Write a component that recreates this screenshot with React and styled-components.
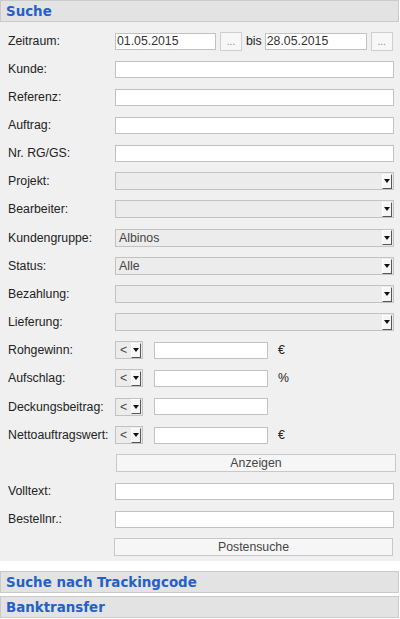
import React from "react";
import styled, { createGlobalStyle } from "styled-components";

const Global = createGlobalStyle`
  html, body { margin: 0; padding: 0; background: #fff; }
  body { font-family: "Liberation Sans", Arial, sans-serif; font-size: 12px; color: #222; }
`;

const Page = styled.div`
  width: 400px;
  display: flex;
  flex-direction: column;
`;

const Header = styled.div`
  box-sizing: border-box;
  height: 22px;
  width: 399px;
  border: 1px solid #cacaca;
  background: #e3e3e3;
  padding-left: 5px;
  display: flex;
  align-items: center;
  font-family: "DejaVu Sans", sans-serif;
  font-weight: bold;
  font-size: 13.4px;
  color: #2360c8;
  margin-top: ${(p) => p.$mt || 0}px;
`;

const Content = styled.div`
  background: #f0f0f0;
  padding: 5px 0 0 8px;
  display: flex;
  flex-direction: column;
`;

const Row = styled.div`
  height: ${(p) => (p.$tall ? 29 : 28)}px;
  display: flex;
  align-items: center;
`;

const Label = styled.div`
  width: 107px;
  flex: none;
  font-size: 12.3px;
  color: #222;
`;

const Input = styled.input`
  box-sizing: border-box;
  height: 17px;
  width: ${(p) => p.$w}px;
  border: 1px solid #c2c2c2;
  background: #fff;
  padding: 0 1px;
  font-family: "Liberation Sans", Arial, sans-serif;
  font-size: 12.3px;
  color: #333;
  margin-left: ${(p) => p.$ml || 0}px;
  outline: none;
`;

const DotButton = styled.button`
  box-sizing: border-box;
  width: 22px;
  height: 19px;
  margin-left: ${(p) => p.$ml || 0}px;
  border: 1px solid #cfcfcf;
  background: #f7f7f7;
  color: #888;
  font-size: 10px;
  font-family: "Liberation Sans", Arial, sans-serif;
  padding: 0 0 3px;
  display: flex;
  align-items: flex-end;
  justify-content: center;
`;

const Bis = styled.span`
  margin-left: 4px;
  margin-right: 3px;
  font-size: 12.3px;
  color: #222;
`;

const SelectBox = styled.div`
  box-sizing: border-box;
  width: ${(p) => p.$w}px;
  height: 18px;
  border: 1px solid #c2c2c2;
  background: #ececec;
  display: flex;
  align-items: center;
  justify-content: space-between;
  padding-left: ${(p) => p.$pl || 3}px;
  font-size: 12.3px;
  color: #444;
`;

const Arrow = styled.div`
  box-sizing: border-box;
  width: 10px;
  height: 15px;
  margin-right: 1px;
  background: #f6f6f6;
  border-right: 1px solid #555;
  border-bottom: 1px solid #555;
  border-top: 1px solid #fff;
  border-left: 1px solid #fff;
  display: flex;
  align-items: center;
  justify-content: center;
  &::after {
    content: "";
    border-left: 3.5px solid transparent;
    border-right: 3.5px solid transparent;
    border-top: 4px solid #111;
  }
`;

const Unit = styled.span`
  margin-left: 10px;
  font-size: 12.3px;
  color: #222;
`;

const WideButton = styled.button`
  box-sizing: border-box;
  width: ${(p) => p.$w}px;
  height: 18px;
  margin-left: ${(p) => p.$ml || 0}px;
  border: 1px solid #c8c8c8;
  background: #f6f6f6;
  color: #444;
  font-family: "Liberation Sans", Arial, sans-serif;
  font-size: 12.3px;
  padding: 0;
`;

const Select = ({ w, value, pl }) => (
  <SelectBox $w={w} $pl={pl}>
    <span>{value}</span>
    <Arrow />
  </SelectBox>
);

const Text = ({ label }) => (
  <Row>
    <Label>{label}</Label>
    <Input $w={279} />
  </Row>
);

const Sel = ({ label, value, tall }) => (
  <Row $tall={tall}>
    <Label>{label}</Label>
    <Select w={279} value={value} />
  </Row>
);

const Cmp = ({ label, unit, tall }) => (
  <Row $tall={tall}>
    <Label>{label}</Label>
    <Select w={28} value="<" pl={4} />
    <Input $w={114} $ml={11} />
    {unit && <Unit>{unit}</Unit>}
  </Row>
);

export default function App() {
  return (
    <Page>
      <Global />
      <Header>Suche</Header>
      <Content>
        <Row>
          <Label>Zeitraum:</Label>
          <Input $w={101} defaultValue="01.05.2015" />
          <DotButton $ml={4}>...</DotButton>
          <Bis>bis</Bis>
          <Input $w={102} defaultValue="28.05.2015" />
          <DotButton $ml={4}>...</DotButton>
        </Row>
        <Text label="Kunde:" />
        <Text label="Referenz:" />
        <Text label="Auftrag:" />
        <Text label="Nr. RG/GS:" />
        <Sel label="Projekt:" />
        <Sel label="Bearbeiter:" />
        <Sel label="Kundengruppe:" value="Albinos" tall />
        <Sel label="Status:" value="Alle" />
        <Sel label="Bezahlung:" />
        <Sel label="Lieferung:" />
        <Cmp label="Rohgewinn:" unit="€" />
        <Cmp label="Aufschlag:" unit="%" />
        <Cmp label="Deckungsbeitrag:" tall />
        <Cmp label="Nettoauftragswert:" unit="€" />
        <Row>
          <WideButton $w={280} $ml={108}>Anzeigen</WideButton>
        </Row>
        <Text label="Volltext:" />
        <Text label="Bestellnr.:" />
        <Row>
          <WideButton $w={279} $ml={106}>Postensuche</WideButton>
        </Row>
      </Content>
      <Header $mt={10}>Suche nach Trackingcode</Header>
      <Header $mt={3}>Banktransfer</Header>
    </Page>
  );
}
